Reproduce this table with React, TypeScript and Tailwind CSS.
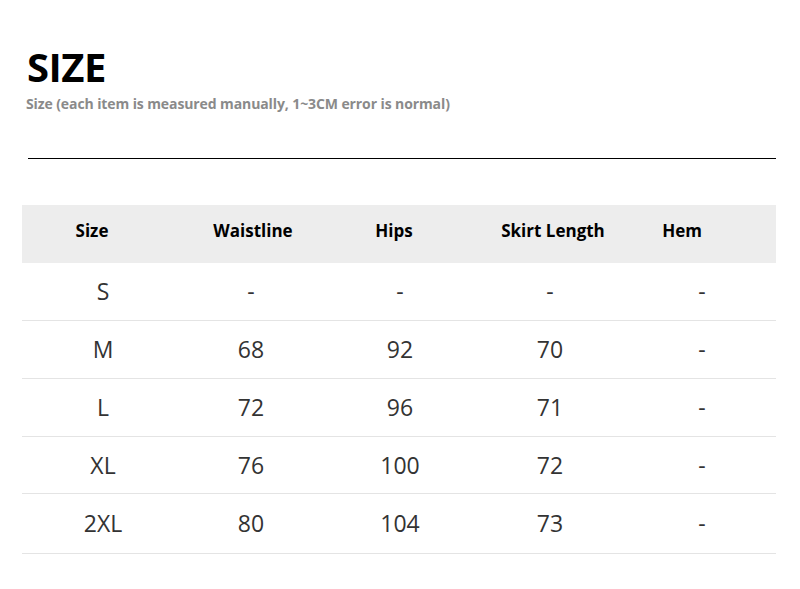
const headers = [
  { label: "Size", ml: "ml-[10px]" },
  { label: "Waistline", ml: "ml-[41px]" },
  { label: "Hips", ml: "ml-[21px]" },
  { label: "Skirt Length", ml: "ml-[39px]" },
  { label: "Hem", ml: "ml-[9px]" },
];

const dataMl = ["ml-[41px]", "ml-[68px]", "ml-[69px]", "ml-[70px]", "ml-[72px]"];

const rows = [
  { h: "h-[58px]", cells: ["S", "-", "-", "-", "-"] },
  { h: "h-[58px]", cells: ["M", "68", "92", "70", "-"] },
  { h: "h-[58px]", cells: ["L", "72", "96", "71", "-"] },
  { h: "h-[57px]", cells: ["XL", "76", "100", "72", "-"] },
  { h: "h-[60px]", cells: ["2XL", "80", "104", "73", "-"] },
];

export default function App() {
  return (
    <div className="w-[800px] h-[589px] bg-white overflow-hidden font-['Open_Sans',sans-serif]">
      <div className="pt-[41px] pl-[27px]">
        <h1 className="text-[40px] leading-[52px] font-bold text-black tracking-[-0.5px]">SIZE</h1>
        <p className="-ml-[1px] mt-[1px] text-[14px] leading-[20px] font-bold text-[#8a8a8a] tracking-[-0.1px]">
          Size (each item is measured manually, 1~3CM error is normal)
        </p>
      </div>
      <div className="ml-[28px] mt-[44px] w-[748px] h-px bg-black" />
      <div className="ml-[22px] mt-[46px] w-[754px]">
        <div className="flex items-center h-[58px] bg-[#ededed] pb-[7px]">
          {headers.map((c) => (
            <div key={c.label} className={`${c.ml} w-[120px] shrink-0 text-center text-[17px] font-bold text-black`}>
              {c.label}
            </div>
          ))}
        </div>
        {rows.map((r) => (
          <div key={r.cells[0]} className={`flex items-center ${r.h} border-b border-[#e4e4e4]`}>
            {r.cells.map((v, i) => (
              <div key={i} className={`${dataMl[i]} w-[80px] shrink-0 text-center text-[23px] text-[#333333]`}>
                {v}
              </div>
            ))}
          </div>
        ))}
      </div>
    </div>
  );
}
